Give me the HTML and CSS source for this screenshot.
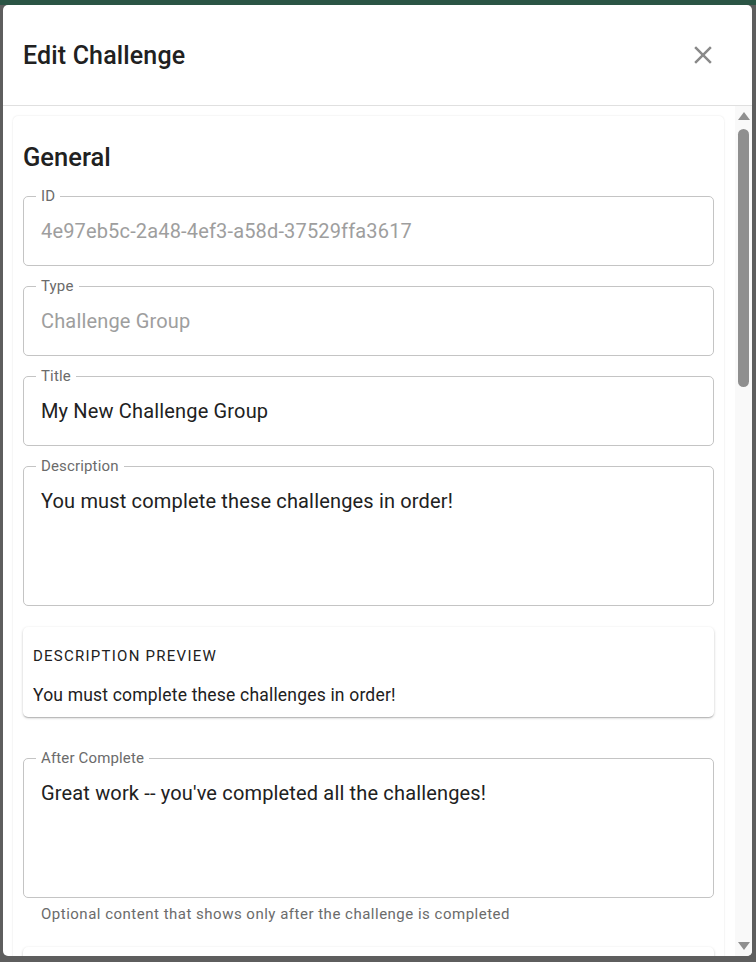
FILE: index.html
```html
<!DOCTYPE html>
<html lang="en">
<head>
<meta charset="utf-8">
<title>Edit Challenge</title>
<link rel="stylesheet" href="styles.css">
</head>
<body>
<div class="backdrop">
  <div class="dialog">
    <header class="dialog-header">
      <h1 class="dialog-title">Edit Challenge</h1>
      <button class="close-btn" aria-label="close">
        <svg viewBox="0 0 24 24" width="30" height="30"><path fill="#8a8a8a" d="M19 6.41 17.59 5 12 10.59 6.41 5 5 6.41 10.59 12 5 17.59 6.41 19 12 13.41 17.59 19 19 17.59 13.41 12z"/></svg>
      </button>
    </header>
    <div class="dialog-body">
      <div class="content">
        <section class="card">
          <h2 class="section-title">General</h2>

          <div class="field">
            <span class="field-label">ID</span>
            <div class="field-value disabled">4e97eb5c-2a48-4ef3-a58d-37529ffa3617</div>
          </div>

          <div class="field">
            <span class="field-label">Type</span>
            <div class="field-value disabled">Challenge Group</div>
          </div>

          <div class="field">
            <span class="field-label">Title</span>
            <div class="field-value">My New Challenge Group</div>
          </div>

          <div class="field multiline">
            <span class="field-label">Description</span>
            <div class="field-value">You must complete these challenges in order!</div>
          </div>

          <div class="preview">
            <div class="overline">Description Preview</div>
            <div class="preview-text">You must complete these challenges in order!</div>
          </div>

          <div class="field multiline after">
            <span class="field-label">After Complete</span>
            <div class="field-value">Great work -- you've completed all the challenges!</div>
          </div>
          <div class="helper">Optional content that shows only after the challenge is completed</div>

          <div class="preview next"></div>
        </section>
      </div>
      <div class="scrollbar">
        <div class="arrow up"></div>
        <div class="track"><div class="thumb"></div></div>
        <div class="arrow down"></div>
      </div>
    </div>
  </div>
</div>
</body>
</html>
```

FILE: styles.css
```css
html, body {
  margin: 0;
  padding: 0;
  height: 100%;
}
body {
  background: linear-gradient(to bottom, #2b5545 0, #2b5545 5px, #5e5e5e 5px, #5e5e5e 100%);
  font-family: Roboto, "Liberation Sans", Arial, sans-serif;
  overflow: hidden;
}
.backdrop {
  padding: 5px 4px 6px 3px;
  height: 962px;
  box-sizing: border-box;
}
.dialog {
  width: 749px;
  height: 951px;
  background: #fff;
  border-radius: 5px;
  display: flex;
  flex-direction: column;
  overflow: hidden;
}
.dialog-header {
  height: 100px;
  flex: none;
  display: flex;
  align-items: center;
  justify-content: space-between;
  padding: 0 20px 0 20px;
  border-bottom: 1px solid #e0e0e0;
}
.dialog-title {
  margin: 0;
  font-size: 25px;
  font-weight: 500;
  color: #212121;
  letter-spacing: 0.15px;
}
.close-btn {
  border: 0;
  background: transparent;
  padding: 0;
  width: 30px;
  height: 30px;
  margin-right: 14px;
  display: flex;
}
.dialog-body {
  flex: 1;
  display: flex;
  min-height: 0;
}
.content {
  flex: 1;
  padding: 10px 11px 0 10px;
  overflow: hidden;
}
.card {
  border-radius: 5px;
  box-shadow: 0 0 2px rgba(0,0,0,0.12), 0 1px 1px rgba(0,0,0,0.04);
  padding: 10px 10px 40px 10px;
}
.section-title {
  margin: 13px 0 21px 0;
  font-size: 25.5px;
  line-height: 36px;
  font-weight: 500;
  color: #212121;
}
.field {
  position: relative;
  height: 70px;
  box-sizing: border-box;
  border: 1px solid #c4c4c4;
  border-radius: 5px;
  margin-bottom: 20px;
}
.field.multiline {
  height: 140px;
}
.field.after {
  margin-top: 41px;
  margin-bottom: 0;
}
.field-label {
  position: absolute;
  left: 12px;
  top: -9px;
  padding: 0 5px;
  background: #fff;
  font-size: 15px;
  line-height: 16px;
  color: #6b6b6b;
  letter-spacing: 0.15px;
}
.field-value {
  height: 100%;
  display: flex;
  align-items: center;
  padding: 0 17px;
  font-size: 20px;
  letter-spacing: 0.16px;
  color: #212121;
}
.field-value.disabled {
  color: #9e9e9e;
}
.multiline .field-value {
  display: block;
  height: auto;
  padding: 20px 17px;
  line-height: 28.75px;
}
.preview {
  margin-top: 21px;
  border-radius: 5px;
  box-shadow: 0 1px 3px rgba(0,0,0,0.2), 0 1px 1px rgba(0,0,0,0.1), 0 2px 1px -1px rgba(0,0,0,0.08);
  padding: 10px;
  height: 90px;
  box-sizing: border-box;
}
.overline {
  font-size: 15px;
  line-height: 40px;
  letter-spacing: 1.25px;
  text-transform: uppercase;
  color: #212121;
  margin-top: -1px;
  margin-bottom: 7px;
}
.preview-text {
  font-size: 17.5px;
  line-height: 25px;
  letter-spacing: 0.19px;
  color: #212121;
}
.helper {
  margin: 4px 17px 0 18px;
  font-size: 15px;
  line-height: 25px;
  color: #6b6b6b;
  letter-spacing: 0.5px;
}
.preview.next {
  margin-top: 20px;
  height: 60px;
}
.scrollbar {
  width: 17px;
  flex: none;
  background: #f9f9f9;
  display: flex;
  flex-direction: column;
  align-items: center;
}
.arrow {
  width: 0;
  height: 0;
  border-left: 6px solid transparent;
  border-right: 6px solid transparent;
}
.arrow.up {
  margin-top: 6px;
  border-bottom: 8px solid #8f8f8f;
}
.arrow.down {
  margin-bottom: 6px;
  border-top: 8px solid #8f8f8f;
}
.track {
  flex: 1;
  width: 100%;
  display: flex;
  justify-content: center;
}
.thumb {
  margin-top: 9px;
  width: 11px;
  height: 258px;
  border-radius: 6px;
  background: #8f8f8f;
}
```
